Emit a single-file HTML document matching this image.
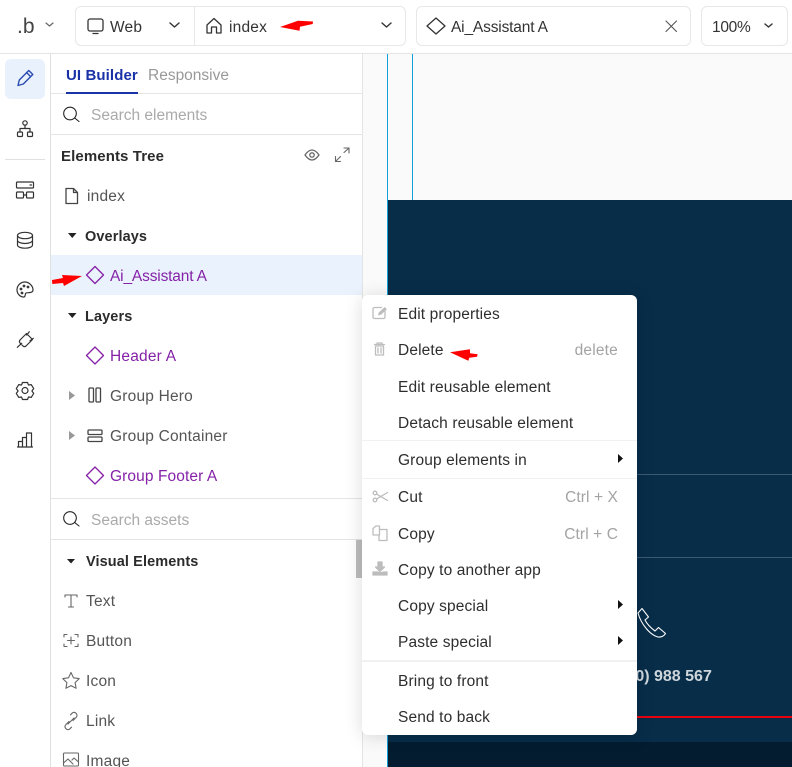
<!DOCTYPE html>
<html><head><meta charset="utf-8"><style>
html,body{margin:0;padding:0;background:#fff}
#p{position:relative;width:792px;height:767px;overflow:hidden;background:#fff;font-family:"Liberation Sans",sans-serif;font-size:15.5px;color:#333}
#p div,#p span,#p svg{position:absolute}
.t{line-height:20px;white-space:nowrap;letter-spacing:.2px;margin-top:3px}
.b{font-weight:bold;color:#2b2b2b;letter-spacing:.1px}
.pu{color:#8522a8}
.g{color:#555}
.m{color:#2e2e2e;left:398px;letter-spacing:.13px}
.r{color:#a3a3a3;right:174px}
svg{overflow:visible;left:0;top:0}
</style></head><body><div id="p">
<div style="left:363px;top:54px;width:429px;height:713px;background:#fafafa"></div>
<div style="left:388px;top:200px;width:404px;height:542px;background:#072d49"></div>
<div style="left:388px;top:742px;width:404px;height:25px;background:#031c30"></div>
<div style="left:387px;top:54px;width:1px;height:713px;background:#12a0d8"></div>
<div style="left:412px;top:54px;width:1px;height:146px;background:#12a0d8"></div>
<div style="left:388px;top:474px;width:404px;height:1px;background:#3c5a70"></div>
<div style="left:388px;top:557px;width:404px;height:1px;background:#3c5a70"></div>
<div style="left:637px;top:716px;width:155px;height:2px;background:#e8000f"></div>
<div class="t" style="left:630px;top:664px;font-weight:bold;font-size:16px;color:#ced6dc;letter-spacing:0">(0) 988 567</div>

<div style="left:0;top:0;width:792px;height:53px;background:#fff;border-bottom:1px solid #e4e4e4"></div>
<div style="left:75px;top:6px;width:329px;height:38px;border:1px solid #e8e8e8;border-radius:6px"></div>
<div style="left:194px;top:6px;width:1px;height:40px;background:#e8e8e8"></div>
<div style="left:416px;top:6px;width:273px;height:38px;border:1px solid #e8e8e8;border-radius:6px"></div>
<div style="left:701px;top:6px;width:85px;height:38px;border:1px solid #e8e8e8;border-radius:6px"></div>
<div class="t" style="left:17px;top:14px;font-size:21px;color:#444;letter-spacing:0">.b</div>
<div class="t" style="left:110px;top:15px">Web</div>
<div class="t" style="left:229px;top:15px">index</div>
<div class="t" style="left:451px;top:15px;letter-spacing:-.16px">Ai_Assistant A</div>
<div class="t" style="left:712px;top:15px;letter-spacing:-.3px">100%</div>

<div style="left:50px;top:54px;width:1px;height:713px;background:#e0e0e0"></div>
<div style="left:362px;top:54px;width:1px;height:713px;background:#e4e4e4"></div>
<div style="left:5px;top:59px;width:40px;height:40px;background:#e9f1fd;border-radius:6px"></div>
<div style="left:5px;top:159px;width:40px;height:1px;background:#e0e0e0"></div>

<div class="t b" style="left:66px;top:63px;color:#1a32a8;font-size:15px">UI Builder</div>
<div class="t" style="left:148px;top:63px;color:#999;letter-spacing:0">Responsive</div>
<div style="left:51px;top:93px;width:311px;height:1px;background:#e4e4e4"></div>
<div style="left:66px;top:92px;width:72px;height:2px;background:#1a32a8"></div>
<div class="t" style="left:91px;top:103px;color:#aaa;letter-spacing:0">Search elements</div>
<div style="left:51px;top:134px;width:311px;height:1px;background:#e4e4e4"></div>
<div class="t b" style="left:61px;top:144px;font-size:15px">Elements Tree</div>
<div class="t g" style="left:87px;top:184px">index</div>
<div class="t b" style="left:85px;top:224px;font-size:14.5px">Overlays</div>
<div style="left:51px;top:255px;width:311px;height:40px;background:#eaf2fd"></div>
<div class="t pu" style="left:110px;top:264px;letter-spacing:-.16px">Ai_Assistant A</div>
<div class="t b" style="left:85px;top:304px;font-size:14.5px">Layers</div>
<div class="t pu" style="left:110px;top:344px">Header A</div>
<div class="t g" style="left:110px;top:384px">Group Hero</div>
<div class="t g" style="left:110px;top:424px">Group Container</div>
<div class="t pu" style="left:110px;top:464px;letter-spacing:.1px">Group Footer A</div>
<div style="left:51px;top:498px;width:311px;height:1px;background:#e4e4e4"></div>
<div class="t" style="left:91px;top:508px;color:#aaa;letter-spacing:0">Search assets</div>
<div style="left:51px;top:539px;width:311px;height:1px;background:#e4e4e4"></div>
<div class="t b" style="left:86px;top:549px;font-size:14.5px">Visual Elements</div>
<div class="t g" style="left:86px;top:589px">Text</div>
<div class="t g" style="left:86px;top:629px">Button</div>
<div class="t g" style="left:86px;top:669px">Icon</div>
<div class="t g" style="left:86px;top:709px">Link</div>
<div class="t g" style="left:86px;top:749px">Image</div>
<div style="left:356px;top:540px;width:6px;height:38px;background:#bdbdbd"></div>

<svg width="792" height="767" fill="none" stroke="#333" stroke-width="1.3" stroke-linecap="round" stroke-linejoin="round">
<path d="M46 23l3.500 3 3.500-3" stroke="#666" stroke-width="1.200"/>
<path d="M170 23l4.500 4 4.500-4M382 23l4.500 4 4.500-4M765 24l3.500 3 3.500-3" stroke-width="1.400"/>
<rect x="88" y="19" width="15" height="12" rx="2"/><path d="M93 33.500h5"/>
<path d="M207 25l7-6.500 7 6.500v8h-4.500v-6h-5v6H207z"/>
<path d="M436 18l9 8-9 8-9-8z"/>
<path d="M666 21l10.500 10.500M676.500 21l-10.500 10.500" stroke="#555" stroke-width="1.100"/>
<path d="M18 85.500l1.300-5.500 9.500-9.500 4 4-9.500 9.500zM26.500 72.500l4 4" stroke="#2a4bb0" stroke-width="1.400"/>
<g stroke-width="1.200">
<circle cx="25" cy="123" r="2.200"/><path d="M25 125v3.500M20 132v-3.500h10v3.500"/><rect x="17.500" y="132" width="5" height="4.500" rx="1"/><rect x="27.500" y="132" width="5" height="4.500" rx="1"/>
<rect x="16.500" y="182" width="17" height="6" rx="1"/><rect x="16.500" y="192" width="7" height="6" rx="1"/><rect x="26.500" y="192" width="7" height="6" rx="1"/><path d="M23.500 195h3M30 185h1.500"/>
<ellipse cx="25" cy="235.500" rx="7.500" ry="3.200"/><path d="M17.500 235.500v9.500c0 1.800 3.400 3.200 7.500 3.200s7.500-1.400 7.500-3.200v-9.500M17.500 240.300c0 1.800 3.400 3.200 7.500 3.200s7.500-1.400 7.500-3.200"/>
<path d="M25 282c-4.500 0-8 3.500-8 7.800 0 4.200 3.200 7.200 6.500 7.200 2.500 0 1.200-2.800 2.300-3.800 1.300-1.100 7.200.5 7.200-3.200 0-4.200-4-8-8-8z"/><circle cx="21" cy="289" r=".8"/><circle cx="24" cy="286" r=".8"/><circle cx="28" cy="287" r=".8"/><circle cx="22" cy="293" r=".8"/>
<path d="M17.300 347.300l4.400-4M26.500 333.500l6 6-6.500 6.500c-1 .8-2 .8-3 0l-3-3c-.8-1-.8-2 0-3zM29.300 331.700l-2.600 3.300M33.300 338.300l-3.300 2.400"/>
<path d="M22.500 382.500h5l1 2.500 2.700-.4 2.500 4-1.800 2.400 1.800 2.400-2.500 4-2.700-.4-1 2.500h-5l-1-2.500-2.700.4-2.500-4 1.800-2.400-1.800-2.400 2.500-4 2.700.4z"/><circle cx="25" cy="390.500" r="3"/>
<path d="M17.500 447h15M18.500 446.500v-5h4v5M22.500 446.500v-9h4v9M26.500 446.500v-13.500h5v13.500"/>
</g>
<circle cx="70" cy="113.500" r="6.300" stroke="#222" stroke-width="1.100"/><path d="M74.700 118l4.300 3.500" stroke="#222" stroke-width="1.100"/>
<circle cx="70" cy="518" r="6.300" stroke="#222" stroke-width="1.100"/><path d="M74.700 522.500l4.300 3.500" stroke="#222" stroke-width="1.100"/>
<path d="M305 155c2.300-3.300 4.700-5 7-5s4.700 1.700 7 5c-2.300 3.300-4.700 5-7 5s-4.700-1.700-7-5z" stroke="#666"/><circle cx="312" cy="155" r="2.200" stroke="#666"/>
<path d="M335.500 161.500l5-5M344 152.500l5-4.500M344 148h5v5M335.500 156.500v5h5" stroke="#666" stroke-width="1.100"/>
<path d="M66 188.500h7.500l4 4v11h-11.500zM73.500 188.500v4h4" stroke="#444"/>
<path d="M95 266.500l8.500 8.500-8.500 8.500-8.500-8.500z" stroke="#8522a8"/>
<path d="M95 347l8.500 8.500-8.500 8.500-8.500-8.500z" stroke="#8522a8"/>
<path d="M95 467l8.500 8.500-8.500 8.500-8.500-8.500z" stroke="#8522a8"/>
<rect x="89" y="388" width="4.500" height="14" rx="1" stroke="#444"/><rect x="96" y="388" width="4.500" height="14" rx="1" stroke="#444"/>
<rect x="88" y="430" width="14" height="4.500" rx="1" stroke="#444"/><rect x="88" y="437" width="14" height="4.500" rx="1" stroke="#444"/>
<g fill="#222" stroke="none">
<path d="M68 233h8.500l-4.250 5zM68 313h8.500l-4.250 5zM67 559h8l-4 4.500z"/>
<path d="M69 391l6 4.500-6 4.500zM69 431l6 4.500-6 4.500z" fill="#999"/>
</g>
<g stroke="#666" stroke-width="1.100">
<path d="M65 597v-2h12v2M71 595v12M68.500 607h5"/>
<path d="M64 637v-2.500h3M75 634.500h3v2.500M78 644v2.500h-3M67 646.500h-3V644M71 637v7M67.500 640.500h7"/>
<path d="M71 672.500l2.500 5.300 5.700.8-4.100 4 1 5.700-5.100-2.700-5.100 2.700 1-5.700-4.100-4 5.700-.8z"/>
<path d="M69 721.500l-3.500 3.500a3 3 0 0 0 4 4.200l2-2M73 720.500l3.500-3.500a3 3 0 0 0-4-4.200l-2 2M68 724l6-6"/>
<rect x="63.500" y="753" width="15" height="13" rx="1"/><path d="M63.500 763l4.500-4 5 5M72 760l2-2 4.500 4"/>
</g>
<path fill="#f00" stroke="none" d="M280 27l18-6.300 15 .8-.3 2.500-12.700 2.700-.5 4zM82 276l-20-1 1 3-11 2 .3 4 10.700-1 1 3z"/>
<path d="M638 613L642 608.500L648.500 617L645 620C647 624 651 628 655 631L658.500 627.500L665.500 633.500C664 636 661 637.500 658 637C650 635 641 624 638 613z" stroke="#fff" stroke-width="1.100"/>
</svg>

<div style="left:362px;top:295px;width:275px;height:440px;background:#fff;border-radius:6px;box-shadow:0 2px 18px rgba(0,0,0,.14)"></div>
<div style="left:362px;top:440px;width:275px;height:1px;background:#f1f1f1"></div>
<div style="left:362px;top:478px;width:275px;height:1px;background:#f1f1f1"></div>
<div style="left:362px;top:660px;width:275px;height:2px;background:#f1f1f1"></div>
<div class="t m" style="top:302px">Edit properties</div>
<div class="t m" style="top:338px">Delete</div>
<div class="t r" style="top:338px">delete</div>
<div class="t m" style="top:375px">Edit reusable element</div>
<div class="t m" style="top:411px">Detach reusable element</div>
<div class="t m" style="top:448px">Group elements in</div>
<div class="t m" style="top:485px">Cut</div>
<div class="t r" style="top:485px;letter-spacing:.1px">Ctrl + X</div>
<div class="t m" style="top:522px">Copy</div>
<div class="t r" style="top:522px;letter-spacing:.1px">Ctrl + C</div>
<div class="t m" style="top:558px">Copy to another app</div>
<div class="t m" style="top:594px">Copy special</div>
<div class="t m" style="top:630px">Paste special</div>
<div class="t m" style="top:669px">Bring to front</div>
<div class="t m" style="top:705px">Send to back</div>
<svg width="792" height="767" fill="none" stroke="#bdbdbd" stroke-width="1.300" stroke-linejoin="round" stroke-linecap="round">
<path d="M385 311v6a1.500 1.500 0 0 1-1.500 1.500h-9a1.500 1.500 0 0 1-1.500-1.500v-8a1.500 1.500 0 0 1 1.500-1.500h7"/>
<path d="M378 315.500l.7-3 6-5.500 2.200 2.200-6 5.600z" fill="#bdbdbd" stroke="none"/>
<path d="M374.500 344.500h10M377 344.500v-1.500h5v1.500M375.500 346h8v9h-8zM378 348v5M381 348v5"/>
<circle cx="375" cy="493" r="1.800"/><circle cx="375" cy="500" r="1.800"/><path d="M376.500 494l11 6.500M376.500 499l11-6.500"/>
<path d="M373 528.500l3-2.500h3.500v9H373zM379.500 529.500h7.500v11h-8v-5"/>
<path d="M373 572h5M383 572h4v3h-14v-3" fill="#bdbdbd"/>
<path d="M378 562h4v5h2.500l-4.500 4.500-4.500-4.500h2.500z" fill="#bdbdbd"/>
<g fill="#111" stroke="none"><path d="M618 454l5 4.500-5 4.500zM618 600l5 4.500-5 4.500zM618 636l5 4.500-5 4.500z"/></g>
<path fill="#f00" stroke="none" d="M450 352.300l20-3v4l7.700 1-.7 2.400-7.700 1-1 3z"/>
</svg>
</div></body></html>
